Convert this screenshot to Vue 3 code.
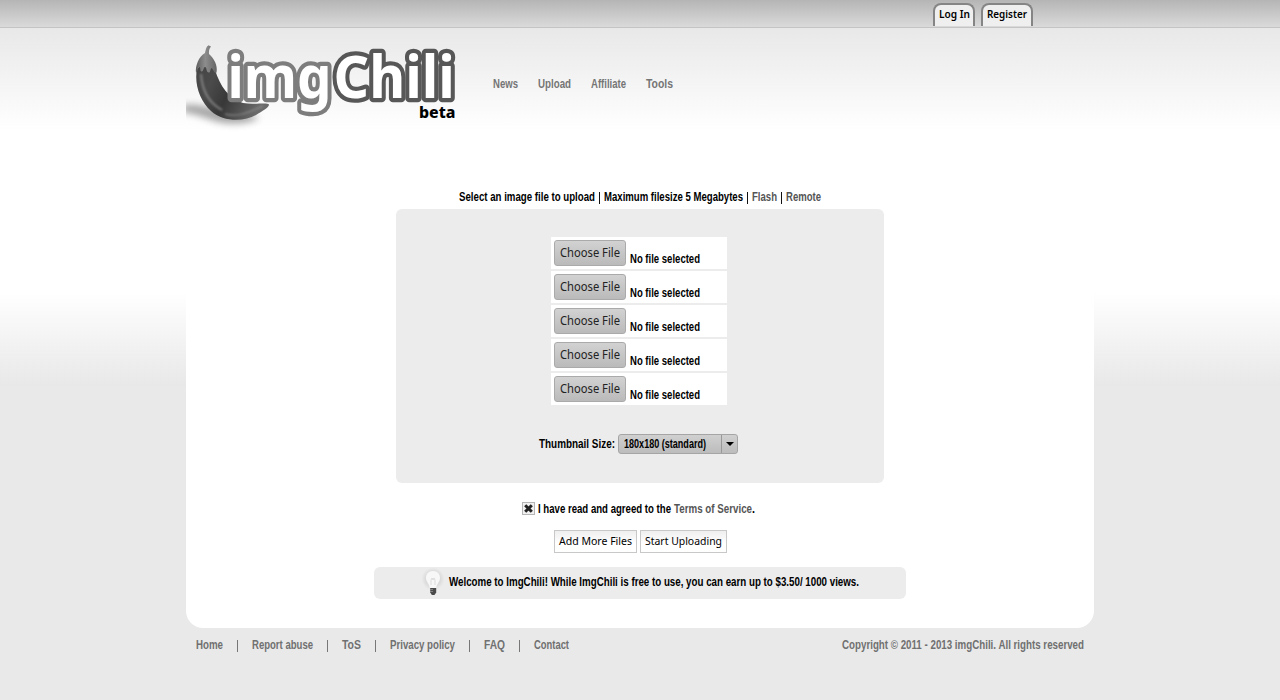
<script setup>
import { h } from 'vue'

// One line of condensed text: the glyphs are fitted into `w` pixels, baseline at 11px.
const Txt = (props) =>
  h('svg', { class: 'txt', width: props.w, height: 14 }, [
    h('text', { x: 0, y: 11, textLength: props.w, lengthAdjust: 'spacingAndGlyphs' }, props.t)
  ])
Txt.props = ['t', 'w']

const nav = [['News', 25], ['Upload', 33], ['Affiliate', 35], ['Tools', 27]]
const links = [['Home', 27], ['Report abuse', 61], ['ToS', 19], ['Privacy policy', 65], ['FAQ', 21], ['Contact', 35]]
</script>

<template>
  <div class="page">
    <header class="top">
      <a class="tab"><Txt t="Log In" :w="31" /></a>
      <a class="tab"><Txt t="Register" :w="40" /></a>
    </header>

    <div class="wrap">
      <div class="head">
        <svg class="logo" width="290" height="96" viewBox="180 36 290 96">
          <defs>
            <linearGradient id="pepper" x1="0" y1="0" x2="1" y2="0.35">
              <stop offset="0" stop-color="#444" />
              <stop offset="0.28" stop-color="#4b4b4b" />
              <stop offset="0.55" stop-color="#383838" />
              <stop offset="1" stop-color="#6a6a6a" />
            </linearGradient>
            <linearGradient id="cap" x1="0" y1="0" x2="1" y2="0">
              <stop offset="0" stop-color="#5e5e5e" />
              <stop offset="0.45" stop-color="#8d8d8d" />
              <stop offset="1" stop-color="#646464" />
            </linearGradient>
            <filter id="soft" x="-30%" y="-60%" width="160%" height="220%"><feGaussianBlur stdDeviation="3.5" /></filter>
            <filter id="shine" x="-50%" y="-50%" width="200%" height="200%"><feGaussianBlur stdDeviation="0.8" /></filter>
            <clipPath id="floor"><rect x="186" y="90" width="90" height="42" /></clipPath>
          </defs>
          <g clip-path="url(#floor)">
            <path d="M183 105C195 104 206 106 220 110C240 111 255 116 259 118C250 124 228 126 212 120C198 115 190 113 183 112Z" fill="#777" opacity=".65" filter="url(#soft)" />
          </g>
          <path d="M197 69C194 84 200 101 211 111C223 122 244 122 256 115C262 111 269 108 269 104.500C267 102 254 105 243 103C229 99 220 86 215 70C210 64 201 63 197 69Z" fill="url(#pepper)" />
          <path d="M201 74C202 90 209 103 222 110" fill="none" stroke="#aaa" stroke-width="2.200" opacity=".55" filter="url(#shine)" />
          <path d="M225 114C239 118 251 111 263 106" fill="none" stroke="#999" stroke-width="1.500" opacity=".6" filter="url(#shine)" />
          <path d="M205 53C206 49 206 47 208.500 45.300L211 46.500C209 49 208.800 51 209 54C214 58 218 66 216.500 72.500C214 74 213 68 211.500 68C210 69 211 73 208.500 72.500C206 72 207 67 205 67C203 67 204 72 201.500 71.500C199.500 71 201 66.500 199 67C197.500 68 198 71 196 73C195 66 199 56 205 53Z" fill="url(#cap)" />
          <g class="word">
            <text x="227.400" y="98.300" font-size="58.500" textLength="104" lengthAdjust="spacingAndGlyphs" stroke="#7d7d7d">img</text>
            <text x="333.600" y="98.300" font-size="58.500" textLength="121.200" lengthAdjust="spacingAndGlyphs" stroke="#575757">Chili</text>
          </g>
          <text class="beta" x="419" y="118" font-size="16.500" textLength="36.500" lengthAdjust="spacingAndGlyphs">beta</text>
        </svg>
        <nav class="nav">
          <a v-for="[t, w] in nav" :key="t"><Txt :t="t" :w="w" /></a>
        </nav>
      </div>

      <main class="main">
        <p class="heading">
          <Txt t="Select an image file to upload" :w="136" /><i class="bar" />
          <Txt t="Maximum filesize 5 Megabytes" :w="139" /><i class="bar" />
          <a class="dim"><Txt t="Flash" :w="25" /></a><i class="bar" />
          <a class="dim"><Txt t="Remote" :w="35" /></a>
        </p>
        <section class="panel">
          <div v-for="n in 5" :key="n" class="file">
            <button class="choose"><Txt t="Choose File" :w="60" /></button>
            <Txt class="none" t="No file selected" :w="70" />
          </div>
          <div class="thumb">
            <Txt t="Thumbnail Size:" :w="76" />
            <div class="select">
              <Txt class="value" t="180x180 (standard)" :w="82" />
              <span class="arrow"><svg width="8" height="4"><path d="M0 0H8L4 4Z" /></svg></span>
            </div>
          </div>
        </section>
        <div class="agree">
          <span class="check"><svg width="9" height="9" viewBox="0 0 9 9"><path d="M1.200 1.200L7.800 7.800M7.800 1.200L1.200 7.800" /></svg></span>
          <Txt t="I have read and agreed to the" :w="133" />
          <a class="dim terms"><Txt t="Terms of Service" :w="78" /></a><Txt t="." :w="3" />
        </div>
        <div class="actions">
          <button><Txt t="Add More Files" :w="73" /></button>
          <button><Txt t="Start Uploading" :w="77" /></button>
        </div>
        <div class="notice">
          <svg class="bulb" width="24" height="30" viewBox="0 0 24 30">
            <defs>
              <radialGradient id="glow"><stop offset=".5" stop-color="#d4d4d4" /><stop offset="1" stop-color="#ececec" /></radialGradient>
            </defs>
            <circle cx="12" cy="11" r="11.500" fill="url(#glow)" />
            <path d="M12 3C7.500 3 5 6 5 10C5 14 8.500 16 8.800 20H15.200C15.500 16 19 14 19 10C19 6 16.500 3 12 3Z" fill="#f7f7f7" />
            <path d="M10 17V12L11 10L12 12L13 10L14 12V17" fill="none" stroke="#d4d4d4" stroke-width=".8" />
            <path d="M9.200 20H15.200V24.500L13.500 27H10.900L9.200 24.500Z" fill="#4a4a4a" />
            <path d="M9.200 21.500H12M9.200 23.500H12" stroke="#aaa" stroke-width=".6" />
          </svg>
          <Txt t="Welcome to ImgChili! While ImgChili is free to use, you can earn up to $3.50/ 1000 views." :w="410" />
        </div>
      </main>

      <footer class="foot">
        <template v-for="([t, w], i) in links" :key="t">
          <i v-if="i" class="sep" />
          <a><Txt :t="t" :w="w" /></a>
        </template>
        <Txt class="copy" t="Copyright © 2011 - 2013 imgChili. All rights reserved" :w="242" />
      </footer>
    </div>
  </div>
</template>

<style>
body { margin: 0; background: #e9e9e9; }
.txt { display: block; flex: none; overflow: visible; fill: currentColor; }
</style>

<style scoped>
.page {
  height: 700px;
  overflow: hidden;
  font: bold 12px/14px "Liberation Sans", Arial, sans-serif;
  color: #000;
  background: linear-gradient(#e8e8e8 28px, #fff 130px, #fff 292px, #e8e8e8 386px, #e9e9e9 387px);
}
.top {
  box-sizing: border-box;
  height: 28px;
  padding: 3px 0 0 933px;
  display: flex;
  gap: 6px;
  background: linear-gradient(#b5b5b5, #dadada 27px);
  border-bottom: 1px solid #c4c4c4;
}
.tab {
  box-sizing: border-box;
  height: 23px;
  padding: 2px 4px 0;
  border: 2px solid #858585;
  border-width: 2px 2px 0;
  border-radius: 8px 8px 0 0;
  background: #efefef;
  font: 600 11px "Noto Sans", sans-serif;
}
.tab:first-child { padding-right: 3px; }
.wrap { width: 908px; margin: 0 auto; }
.head { height: 104px; display: flex; align-items: flex-start; }
.logo { flex: none; margin: 8px 0 0 -6px; }
.word text {
  font-family: "Noto Sans", sans-serif;
  font-weight: 700;
  fill: #fff;
  stroke-width: 8.6px;
  stroke-linejoin: round;
  paint-order: stroke;
}
.beta { font-family: "Noto Sans", sans-serif; font-weight: 800; fill: #000; }
.nav { display: flex; gap: 20px; margin: 49px 0 0 23px; color: #757575; }
.main {
  box-sizing: border-box;
  height: 496px;
  padding-top: 58px;
  display: flex;
  flex-direction: column;
  align-items: center;
  background: #fff;
  border-radius: 0 0 17px 17px;
}
.heading { display: flex; margin: 0 0 5px; }
.bar { width: 1px; height: 12px; margin: 2px 4px 0; background: #111; }
.dim { color: #555; }
.panel {
  box-sizing: border-box;
  width: 488px;
  height: 274px;
  padding: 28px 0 0 155px;
  border-radius: 6px;
  background: #ececec;
}
.file {
  box-sizing: border-box;
  width: 176px;
  height: 32px;
  margin-bottom: 2px;
  padding: 3px;
  display: flex;
  background: #fff;
}
.choose {
  box-sizing: border-box;
  width: 72px;
  height: 26px;
  padding: 5px 5px 0;
  border: 1px solid #aaa;
  border-radius: 3px;
  background: linear-gradient(#d2d2d2, #bababa);
  font: 12px "Noto Sans", sans-serif;
  color: #222;
  display: flex;
}
.none { margin: 12px 0 0 4px; }
.thumb { display: flex; margin: 27px 0 0 -12px; padding-top: 2px; }
.thumb > .txt { margin-top: 3px; }
.select {
  box-sizing: border-box;
  width: 120px;
  height: 20px;
  margin-left: 3px;
  padding: 2px 0 0 5px;
  display: flex;
  border: 1px solid #a5a5a5;
  border-radius: 3px;
  background: linear-gradient(#d0d0d0, #bcbcbc);
}
.arrow {
  width: 15px;
  height: 18px;
  margin: -2px 0 0 auto;
  display: flex;
  align-items: center;
  justify-content: center;
  border-left: 1px solid #999;
}
.agree { display: flex; margin: 19px 0 14px; width: 236px; align-self: flex-start; padding-left: 336px; }
.check {
  box-sizing: border-box;
  width: 13px;
  height: 13px;
  margin-right: 3px;
  display: flex;
  align-items: center;
  justify-content: center;
  border: 1px solid #b5b5b5;
  background: #f1f1f1;
}
.check path { stroke: #222; stroke-width: 3; }
.terms { margin: 0 0 0 3px; }
.actions { display: flex; gap: 3px; margin-left: 1px; }
.actions button {
  box-sizing: border-box;
  height: 23px;
  padding: 3px 4px 0;
  display: flex;
  border: 1px solid #c8c8c8;
  background: linear-gradient(#efefef, #fff 60%);
  font: 11px "Noto Sans", sans-serif;
  color: #000;
}
.notice {
  box-sizing: border-box;
  width: 532px;
  height: 32px;
  margin-top: 14px;
  padding-left: 47px;
  display: flex;
  border-radius: 6px;
  background: #ececec;
}
.notice > .txt { margin: 8px 0 0 4px; }
.bulb { margin-top: 1px; }
.foot { display: flex; padding: 10px 10px 0; color: #707070; }
.sep { width: 1px; height: 12px; margin: 2px 14px 0; background: #777; }
.copy { margin-left: auto; }
</style>
